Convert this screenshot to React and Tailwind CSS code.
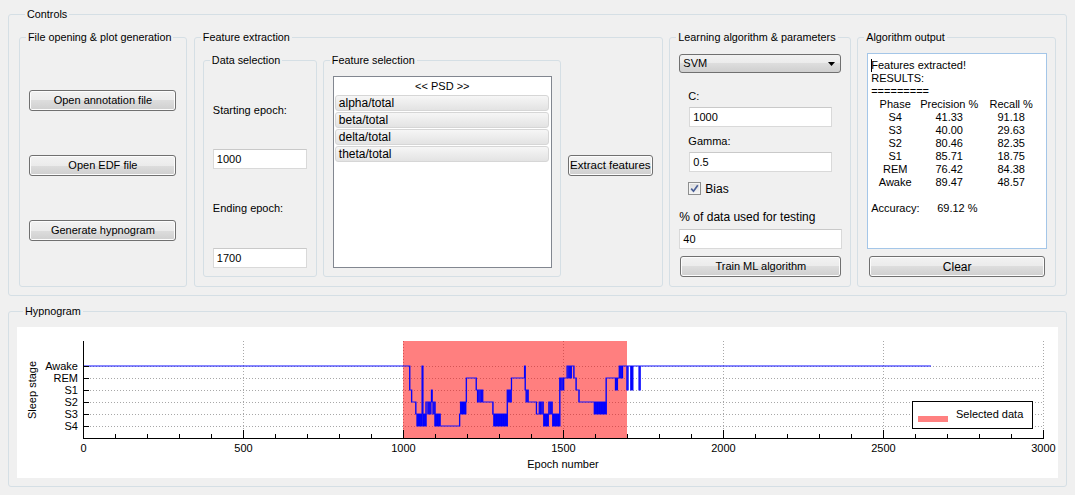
import clsx from 'clsx'

const FONT = "font-['Liberation_Sans',Arial,sans-serif]"

function Group({ title, className, children }) {
  return (
    <fieldset className={clsx('rounded-[3px] border border-[#d5dfe5] min-w-0', className)}>
      <legend className="ml-[6px] px-[2px] text-[10.8px] leading-[14px]">{title}</legend>
      {children}
    </fieldset>
  )
}

function Btn({ className, children }) {
  return (
    <div
      className={clsx(
        'flex items-center justify-center whitespace-nowrap rounded-[3px] border border-[#707070] bg-[linear-gradient(to_bottom,#f2f2f2_0%,#ebebeb_50%,#dddddd_50%,#cfcfcf_100%)] shadow-[inset_0_0_0_1px_#fcfcfc] leading-none',
        className
      )}
    >
      {children}
    </div>
  )
}

function Field({ className, children }) {
  return (
    <div className={clsx('flex h-[20px] items-center border border-[#d9d9d9] border-t-[#c9c9c9] bg-white pl-[3px] leading-none', className)}>
      {children}
    </div>
  )
}

const X = (e) => 83 + e * 0.32
const Y = (s) => 426 - 12 * s

// stage: 5 Awake, 4 REM, 3 S1, 2 S2, 1 S3, 0 S4 ; [a, b, period] = rapid toggling
const SEGS = [
  [0, 5],
  [1021, 3], [1027, 2], [1040, 1],
  [1044, [0, 1, 2]], [1060, 5], [1062, [0, 1, 2]], [1072, 2], [1075, [2, 1, 3]], [1089, 3], [1091, [2, 1, 3]],
  [1100, [0, 1, 2]], [1118, 0],
  [1177, 1], [1180, [2, 1, 3]], [1196, 2], [1198, 4], [1229, 3], [1233, [2, 3, 4]], [1250, 2],
  [1281, 1], [1284, [0, 1, 2]], [1326, [3, 2, 3]], [1339, 4], [1380, 5], [1382, [3, 2, 3]], [1391, 2],
  [1417, 1], [1422, [1, 2, 4]], [1440, [0, 1, 2]], [1456, 2], [1460, [1, 2, 3]], [1468, [0, 1, 2]],
  [1490, 4], [1493, [3, 4, 4]], [1502, 4], [1513, 5], [1518, [4, 5, 3]], [1526, 5], [1534, 4], [1541, 3],
  [1550, 2], [1598, [1, 2, 2]], [1635, 4], [1664, [3, 4, 2]], [1670, 4], [1676, [5, 4, 3]], [1686, 5],
  [1700, 3], [1703, 5], [1712, 3], [1714, 5], [1716, 3], [1718, 5], [1738, 3], [1741, 5],
]

function buildPaths(end) {
  let d = `M${X(0)} ${Y(5)}`
  let v = ''
  let cur = 5
  const step = (e, s) => {
    const x = X(e).toFixed(2)
    d += ` H${x} V${Y(s)}`
    if (s !== cur) v += ` M${x} ${Y(cur)} V${Y(s)}`
    cur = s
  }
  for (let i = 1; i < SEGS.length; i++) {
    const [s, spec] = SEGS[i]
    const next = i + 1 < SEGS.length ? SEGS[i + 1][0] : end
    if (typeof spec === 'number') {
      step(s, spec)
    } else {
      const [a, b, p] = spec
      let t = 0
      for (let e = s; e < next; e += p) {
        step(e, t % 2 ? b : a)
        t++
      }
    }
  }
  return [d + ` H${X(end)}`, v]
}

const LEVELS = ['S4', 'S3', 'S2', 'S1', 'REM', 'Awake']

function Plot() {
  const majors = [0, 500, 1000, 1500, 2000, 2500, 3000]
  const minors = Array.from({ length: 31 }, (_, i) => i * 100).filter((v) => v % 500 !== 0)
  const [line, verticals] = buildPaths(2650)
  return (
    <svg width="1041" height="151" viewBox="17 327 1041 151" className="block" fontFamily="Liberation Sans, Arial, sans-serif" fontSize="11">
      <rect x="17" y="327" width="1041" height="151" fill="#fff" />
      {LEVELS.map((_, i) => (
        <line key={i} x1="84" x2="1043" y1={Y(i) + 0.5} y2={Y(i) + 0.5} stroke="#a8a8a8" strokeDasharray="1 2" />
      ))}
      {majors.slice(1).map((v) => (
        <line key={v} x1={X(v) + 0.5} x2={X(v) + 0.5} y1="341" y2="438" stroke="#a8a8a8" strokeDasharray="1 2" />
      ))}
      <rect x={X(1000)} y="341" width={X(1700) - X(1000)} height="97" fill="#ff0000" fillOpacity="0.5" />
      <path d={line} fill="none" stroke="#1414ff" strokeOpacity="0.68" strokeWidth="1.4" />
      <path d={verticals} fill="none" stroke="#0000ff" strokeWidth="1" />
      <line x1="83.5" x2="83.5" y1="341" y2="438" stroke="#000" />
      <line x1="83" x2="1044" y1="438.5" y2="438.5" stroke="#000" />
      {LEVELS.map((l, i) => (
        <g key={l}>
          <line x1="84" x2="89" y1={Y(i) + 0.5} y2={Y(i) + 0.5} stroke="#000" />
          <text x="78" y={Y(i) + 4} textAnchor="end">{l}</text>
        </g>
      ))}
      {majors.map((v) => (
        <g key={v}>
          <line x1={X(v) + 0.5} x2={X(v) + 0.5} y1="430" y2="438" stroke="#000" />
          <text x={X(v) + 0.5} y="452" textAnchor="middle">{v}</text>
        </g>
      ))}
      {minors.map((v) => (
        <line key={v} x1={X(v) + 0.5} x2={X(v) + 0.5} y1="434" y2="438" stroke="#000" />
      ))}
      <text x="563" y="468" textAnchor="middle">Epoch number</text>
      <text x="0" y="0" textAnchor="middle" transform="translate(36 390) rotate(-90)">Sleep stage</text>
      <rect x="912.5" y="401.5" width="120" height="27" fill="#fff" stroke="#000" />
      <rect x="918" y="416" width="30" height="6" fill="#ff8080" />
      <text x="956" y="418">Selected data</text>
    </svg>
  )
}

const ROWS = [
  ['S4', '41.33', '91.18'],
  ['S3', '40.00', '29.63'],
  ['S2', '80.46', '82.35'],
  ['S1', '85.71', '18.75'],
  ['REM', '76.42', '84.38'],
  ['Awake', '89.47', '48.57'],
]

function Row({ cells }) {
  return (
    <div className="flex">
      <span className="w-[48px] text-center">{cells[0]}</span>
      <span className="w-[60px] text-center">{cells[1]}</span>
      <span className="w-[62px] pl-[2px] text-center">{cells[2]}</span>
    </div>
  )
}

export default function App() {
  return (
    <div className={clsx('h-[495px] w-[1075px] overflow-hidden bg-[#f0f0f0] px-[8px] pt-[7px] text-[11px] text-black', FONT)}>
      <Group title="Controls" className="px-[10px] pb-[8px]">
        <div className="mt-[9px] flex items-start">
          <Group title="File opening & plot generation" className="h-[257px] w-[168px]">
            <div className="flex flex-col items-center">
              <Btn className="mt-[46px] h-[21px] w-[147px]">Open annotation file</Btn>
              <Btn className="mt-[44px] h-[21px] w-[147px]">Open EDF file</Btn>
              <Btn className="mt-[44px] h-[21px] w-[147px]">Generate hypnogram</Btn>
            </div>
          </Group>

          <Group title="Feature extraction" className="ml-[7px] h-[257px] w-[470px]">
            <div className="flex items-start pl-[8px]">
              <Group title="Data selection" className="mt-[9px] h-[224px] w-[114px]">
                <div className="flex flex-col pl-[9px]">
                  <div className="mt-[36px] leading-[14px]">Starting epoch:</div>
                  <Field className="mt-[32px] w-[94px]">1000</Field>
                  <div className="mt-[32px] leading-[14px]">Ending epoch:</div>
                  <Field className="mt-[33px] w-[94px]">1700</Field>
                </div>
              </Group>
              <Group title="Feature selection" className="ml-[6px] mt-[9px] h-[224px] w-[238px]">
                <div className="ml-[9px] mt-[9px] h-[192px] w-[219px] border border-[#828790] bg-white">
                  <div className="pt-[2px] text-center leading-[14px]">&lt;&lt; PSD &gt;&gt;</div>
                  <div className="ml-[1px] mr-[2px] mt-[2px] flex flex-col gap-[1px]">
                    {['alpha/total', 'beta/total', 'delta/total', 'theta/total'].map((f) => (
                      <div
                        key={f}
                        className="flex h-[16px] items-center rounded-[3px] border border-[#d6d6d6] bg-[linear-gradient(to_bottom,#f6f6f6,#e3e3e3)] pl-[3px] text-[12px] leading-none"
                      >
                        {f}
                      </div>
                    ))}
                  </div>
                </div>
              </Group>
              <Btn className="ml-[7px] mt-[111px] h-[21px] w-[85px] text-[11.5px]">Extract features</Btn>
            </div>
          </Group>

          <Group title="Learning algorithm & parameters" className="ml-[6px] h-[257px] w-[182px]">
            <div className="flex flex-col">
              <div className="ml-[9px] mt-[10px] flex h-[19px] w-[162px] items-center justify-between rounded-[3px] border border-[#707070] bg-[linear-gradient(to_bottom,#f2f2f2_0%,#ebebeb_50%,#dddddd_50%,#cfcfcf_100%)] pl-[3px] pr-[5px] leading-none">
                <span>SVM</span>
                <svg width="7" height="4" viewBox="0 0 7 4">
                  <polygon points="0,0 7,0 3.5,4" fill="#000" />
                </svg>
              </div>
              <div className="ml-[18px] mt-[16px] leading-[14px]">C:</div>
              <Field className="ml-[19px] mt-[4px] w-[143px]">1000</Field>
              <div className="ml-[18px] mt-[7px] leading-[14px]">Gamma:</div>
              <Field className="ml-[19px] mt-[4px] w-[143px]">0.5</Field>
              <div className="ml-[18px] mt-[10px] flex h-[13px] items-center gap-[4px]">
                <div className="flex h-[13px] w-[13px] items-center justify-center border border-[#8e8f8f] bg-[linear-gradient(to_bottom,#dcdcdc,#f6f6f6)] shadow-[inset_0_0_0_1px_#f4f4f4]">
                  <svg width="11" height="11" viewBox="0 0 11 11">
                    <path d="M2.2 5.6 L4.5 8.2 L8.8 2.2" fill="none" stroke="#4a5f96" strokeWidth="1.7" />
                  </svg>
                </div>
                <span className="text-[12px]">Bias</span>
              </div>
              <div className="ml-[9px] mt-[15px] text-[12px] leading-[14px]">% of data used for testing</div>
              <Field className="ml-[9px] mt-[5px] w-[163px]">40</Field>
              <Btn className="ml-[10px] mt-[7px] h-[21px] w-[161px]">Train ML algorithm</Btn>
            </div>
          </Group>

          <Group title="Algorithm output" className="ml-[6px] h-[257px] w-[199px]">
            <div className="flex flex-col">
              <div className="relative ml-[9px] mt-[9px] h-[196px] w-[180px] border border-[#a4c6e8] bg-white pl-[3px] pt-[5px] leading-[13px]">
                <div className="absolute left-[3px] top-[5px] h-[13px] w-px bg-black" />
                <div>Features extracted!</div>
                <div>RESULTS:</div>
                <div>=========</div>
                <Row cells={['Phase', 'Precision %', 'Recall %']} />
                {ROWS.map((r) => (
                  <Row key={r[0]} cells={r} />
                ))}
                <div className="h-[13px]" />
                <div className="flex">
                  <span className="w-[66px]">Accuracy:</span>
                  <span>69.12 %</span>
                </div>
              </div>
              <Btn className="ml-[11px] mt-[7px] h-[21px] w-[176px] text-[12px]">Clear</Btn>
            </div>
          </Group>
        </div>
      </Group>

      <Group title="Hypnogram" className="mt-[8px] px-[8px] pb-[8px]">
        <div className="mt-[9px]">
          <Plot />
        </div>
      </Group>
    </div>
  )
}
